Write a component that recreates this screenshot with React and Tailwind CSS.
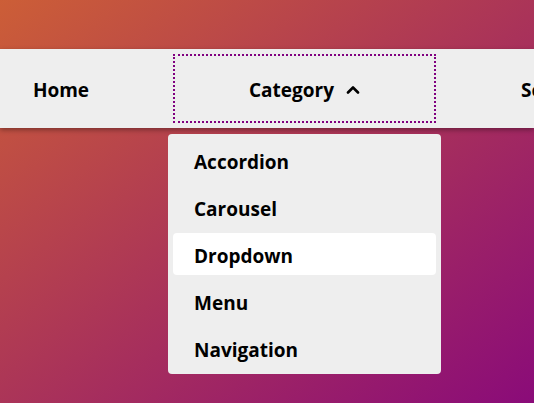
import { useState } from "react";

const categories = ["Accordion", "Carousel", "Dropdown", "Menu", "Navigation"];

function ChevronUp() {
  return (
    <svg width="14" height="9" viewBox="0 0 14 9" className="ml-3 mb-[1px]">
      <polyline points="2,7.5 7,2.5 12,7.5" fill="none" stroke="#000" strokeWidth="2.6" strokeLinecap="round" strokeLinejoin="round" />
    </svg>
  );
}

export default function App() {
  const [active] = useState("Dropdown");

  return (
    <div
      className="h-[403px] w-[534px] overflow-hidden bg-[linear-gradient(to_bottom_right,#cc5e37,#8a0b79)] pt-[49px]"
      style={{ fontFamily: '"Open Sans", "Noto Sans", sans-serif' }}
    >
      {/* Top navigation */}
      <nav className="relative z-10 h-[79px] bg-[#eeeeee] shadow-[0_2px_5px_rgba(0,0,0,0.35)]">
        <ul className="ml-[-46px] flex h-full items-stretch">
          <li className="flex w-[214px] shrink-0 items-center justify-center pt-[3px] text-[19px] font-bold text-black">
            Home
          </li>
          <li className="relative flex w-[273px] shrink-0 flex-col">
            <button className="m-[5px] flex flex-1 items-center justify-center pt-[3px] text-[19px] font-bold text-black outline-2 -outline-offset-2 outline-dotted outline-[#800080]">
              Category
              <ChevronUp />
            </button>

            {/* Open submenu */}
            <ul className="absolute left-0 top-[85px] flex w-[273px] flex-col gap-[5px] rounded-[4px] bg-[#eeeeee] p-[5px]">
              {categories.map((c) => (
                <li
                  key={c}
                  className={`flex h-[42px] items-center rounded-[4px] pl-[21px] pt-[4px] text-[19px] font-bold text-black ${
                    c === active ? "bg-white" : ""
                  }`}
                >
                  {c}
                </li>
              ))}
            </ul>
          </li>
          <li className="flex shrink-0 items-center pl-[80px] pt-[3px] text-[19px] font-bold text-black">
            Search
          </li>
        </ul>
      </nav>
    </div>
  );
}
